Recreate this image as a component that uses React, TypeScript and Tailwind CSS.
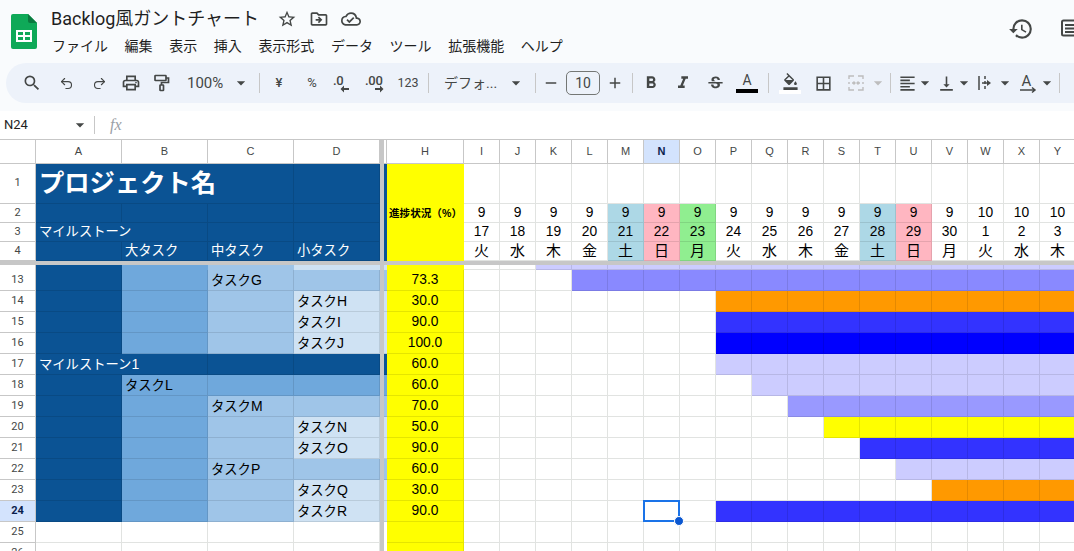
import { ReactNode } from "react"
import {
  MdHistory, MdOutlineCloudDone, MdOutlineDriveFileMove, MdOutlineLocalPrintshop,
  MdOutlineStarBorder, MdSearch, MdFormatBold, MdFormatItalic, MdStrikethroughS, MdBorderAll,
  MdFormatAlignLeft, MdVerticalAlignBottom, MdOutlineFormatColorFill, MdAdd, MdRemove, MdArrowDropDown,
} from "react-icons/md"
import { Undo2, Redo2 } from "lucide-react"

const ui = "font-['Roboto','Noto_Sans_CJK_JP',sans-serif]"
const sheet = "font-['Liberation_Sans','Noto_Sans_CJK_JP',sans-serif]"

const DARK = "bg-[#0b5394]"
const MID = "bg-[#6fa8dc]"
const LIGHT = "bg-[#9fc5e8]"
const PALE = "bg-[#cfe2f3]"
const WHITE = "bg-white"

const menus = ["ファイル", "編集", "表示", "挿入", "表示形式", "データ", "ツール", "拡張機能", "ヘルプ"]
const dateCols = ["I", "J", "K", "L", "M", "N", "O", "P", "Q", "R", "S", "T", "U", "V", "W", "X", "Y"]
const months = ["9", "9", "9", "9", "9", "9", "9", "9", "9", "9", "9", "9", "9", "9", "10", "10", "10"]
const days = ["17", "18", "19", "20", "21", "22", "23", "24", "25", "26", "27", "28", "29", "30", "1", "2", "3"]
const weekdays = ["火", "水", "木", "金", "土", "日", "月", "火", "水", "木", "金", "土", "日", "月", "火", "水", "木"]

const dayColor = (i: number) => {
  if (i === 4 || i === 11) return "bg-[#add8e6]"
  if (i === 5 || i === 12) return "bg-[#ffb6c1]"
  if (i === 6) return "bg-[#90ee90]"
  return WHITE
}

type Row = {
  n: string
  a: string
  b: string
  c: string
  d: string
  tone: string
  label?: string
  level?: "a" | "b" | "c" | "d"
  value?: string
  start?: number
  bar?: string
}

const rows: Row[] = [
  { n: "13", a: DARK, b: MID, c: LIGHT, d: LIGHT, tone: LIGHT, label: "タスクG", level: "c", value: "73.3", start: 3, bar: "bg-[#8989ff]" },
  { n: "14", a: DARK, b: MID, c: LIGHT, d: PALE, tone: PALE, label: "タスクH", level: "d", value: "30.0", start: 7, bar: "bg-[#ff9900]" },
  { n: "15", a: DARK, b: MID, c: LIGHT, d: PALE, tone: PALE, label: "タスクI", level: "d", value: "90.0", start: 7, bar: "bg-[#3333ff]" },
  { n: "16", a: DARK, b: MID, c: LIGHT, d: PALE, tone: PALE, label: "タスクJ", level: "d", value: "100.0", start: 7, bar: "bg-[#0000ff]" },
  { n: "17", a: DARK, b: DARK, c: DARK, d: DARK, tone: DARK, label: "マイルストーン1", level: "a", value: "60.0", start: 7, bar: "bg-[#ccccff]" },
  { n: "18", a: DARK, b: MID, c: MID, d: MID, tone: MID, label: "タスクL", level: "b", value: "60.0", start: 8, bar: "bg-[#ccccff]" },
  { n: "19", a: DARK, b: MID, c: LIGHT, d: LIGHT, tone: LIGHT, label: "タスクM", level: "c", value: "70.0", start: 9, bar: "bg-[#9999ff]" },
  { n: "20", a: DARK, b: MID, c: LIGHT, d: PALE, tone: PALE, label: "タスクN", level: "d", value: "50.0", start: 10, bar: "bg-[#ffff00]" },
  { n: "21", a: DARK, b: MID, c: LIGHT, d: PALE, tone: PALE, label: "タスクO", level: "d", value: "90.0", start: 11, bar: "bg-[#3333ff]" },
  { n: "22", a: DARK, b: MID, c: LIGHT, d: LIGHT, tone: LIGHT, label: "タスクP", level: "c", value: "60.0", start: 12, bar: "bg-[#ccccff]" },
  { n: "23", a: DARK, b: MID, c: LIGHT, d: PALE, tone: PALE, label: "タスクQ", level: "d", value: "30.0", start: 13, bar: "bg-[#ff9900]" },
  { n: "24", a: DARK, b: MID, c: LIGHT, d: PALE, tone: PALE, label: "タスクR", level: "d", value: "90.0", start: 7, bar: "bg-[#3333ff]" },
  { n: "25", a: WHITE, b: WHITE, c: WHITE, d: WHITE, tone: WHITE },
  { n: "26", a: WHITE, b: WHITE, c: WHITE, d: WHITE, tone: WHITE },
]

function SheetsLogo() {
  return (
    <svg width="26" height="35" viewBox="0 0 26 35">
      <path d="M2 0h15l9 9v24a2 2 0 0 1-2 2H2a2 2 0 0 1-2-2V2a2 2 0 0 1 2-2z" fill="#0fa958" />
      <path d="M17 0l9 9h-7a2 2 0 0 1-2-2z" fill="#0a7a3f" />
      <path d="M5 16h16v12H5zm2 2v3h5v-3zm7 0v3h5v-3zm-7 5v3h5v-3zm7 0v3h5v-3z" fill="#fff" fillRule="evenodd" />
    </svg>
  )
}

function Tool({ w, children }: { w: string; children: ReactNode }) {
  return <div className={`${w} shrink-0 flex items-center justify-center text-[#444746]`}>{children}</div>
}

function Sep({ m }: { m: string }) {
  return <div className={`${m} w-px h-5 shrink-0 bg-[#c7c7c7]`} />
}

function Caret({ w = "w-[18px]", faded }: { w?: string; faded?: boolean }) {
  return (
    <Tool w={w}>
      <MdArrowDropDown size={20} className={`shrink-0 ${faded ? "text-[#bdbdbd]" : ""}`} />
    </Tool>
  )
}

function DecimalIcon({ label, dir }: { label: string; dir: "left" | "right" }) {
  return (
    <div className="relative w-[24px] h-[24px] text-[#444746]">
      <span className="absolute left-[3px] top-[3px] text-[13px] font-medium leading-[14px] tracking-[-0.3px] whitespace-nowrap">{label}</span>
      <svg width="24" height="24" viewBox="0 0 24 24" className="absolute left-0 top-0" fill="currentColor">
        {dir === "left" ? <path d="M14 17h5v2h-5v2.500L10.500 18 14 14.500z" /> : <path d="M13 17h5v-2.500l3.500 3.500-3.500 3.500V19h-5z" />}
      </svg>
    </div>
  )
}

function RollerIcon() {
  return (
    <svg width="16" height="18" viewBox="0 0 16 18" fill="none" stroke="#444746" strokeWidth="1.7">
      <rect x="1" y="1.500" width="11" height="5" rx="0.5" />
      <path d="M12 4h2.500v4.500H7.500V11" />
      <rect x="6" y="11" width="3.500" height="5.500" rx="0.5" />
    </svg>
  )
}

function MergeIcon() {
  return (
    <svg width="18" height="18" viewBox="0 0 18 18" fill="none" stroke="#bdbdbd" strokeWidth="1.4">
      <path d="M7 2H2v3M2 13v3h5M11 2h5v3M16 13v3h-5M2 8v2M16 8v2M5 9h3M6.500 7.500 8 9l-1.500 1.500M13 9h-3M11.500 7.500 10 9l1.500 1.500" />
    </svg>
  )
}

function WrapIcon() {
  return (
    <svg width="18" height="18" viewBox="0 0 18 18" fill="none" stroke="#444746" strokeWidth="1.5">
      <path d="M3 2v14" />
      <path d="M9 2v14" strokeDasharray="3 2" />
      <path d="M6 9h6" />
      <path d="M11 6l4 3-4 3z" fill="#444746" stroke="none" />
    </svg>
  )
}

function RotateIcon() {
  return (
    <div className="relative w-[20px] h-[24px] text-[#444746]">
      <span className="absolute left-0 top-[1px] text-[15px] leading-[18px] w-[15px] text-center">A</span>
      <svg width="20" height="24" viewBox="0 0 20 24" className="absolute left-0 top-0" fill="none" stroke="currentColor" strokeWidth="1.5">
        <path d="M1 19h14M13 16.500l3 2.500-3 2.500" />
      </svg>
    </div>
  )
}

function OutlineIcon() {
  return (
    <svg width="21" height="18" viewBox="0 0 21 18" fill="none" stroke="#444746" strokeWidth="2">
      <rect x="1" y="1.500" width="19" height="15" rx="1.500" />
      <path d="M4 6h16M4 9.500h16M4 13h16" />
    </svg>
  )
}

function Toolbar() {
  return (
    <div className="ml-[6px] h-10 shrink-0 flex items-center rounded-l-full bg-[#edf2fa] pl-[10px] overflow-hidden">
      <Tool w="w-[32px]"><MdSearch size={20} /></Tool>
      <Tool w="ml-[2px] w-[33px]"><Undo2 size={15} strokeWidth={1.8} /></Tool>
      <Tool w="ml-px w-[31px]"><Redo2 size={15} strokeWidth={1.8} /></Tool>
      <Tool w="w-[31px]"><MdOutlineLocalPrintshop size={20} /></Tool>
      <Tool w="w-[31px]"><RollerIcon /></Tool>
      <div className="ml-[10px] w-[45px] shrink-0 text-[15px] text-[#444746]">100%</div>
      <Caret />
      <Sep m="ml-[9px]" />
      <Tool w="ml-[4px] w-[30px]"><span className="text-[13px] font-medium">¥</span></Tool>
      <Tool w="ml-[3px] w-[30px]"><span className="text-[13px]">%</span></Tool>
      <Tool w="w-[30px]"><DecimalIcon label=".0" dir="left" /></Tool>
      <Tool w="ml-[2px] w-[30px]"><DecimalIcon label=".00" dir="right" /></Tool>
      <Tool w="ml-[5px] w-[28px]"><span className="text-[12.500px]">123</span></Tool>
      <Sep m="ml-[6px]" />
      <div className="ml-[15px] w-[62px] shrink-0 text-[14px] text-[#444746]">デフォ...</div>
      <Caret w="w-[20px]" />
      <Sep m="ml-[9px]" />
      <Tool w="ml-[6px] w-[18px]"><MdRemove size={18} /></Tool>
      <div className="ml-[6px] w-[34px] h-6 shrink-0 rounded-[5px] border border-[#747775] flex items-center justify-center text-[14px] text-[#444746]">10</div>
      <Tool w="ml-[6px] w-[18px]"><MdAdd size={18} /></Tool>
      <Sep m="ml-[8px]" />
      <Tool w="ml-[2px] w-[31px]"><MdFormatBold size={20} /></Tool>
      <Tool w="ml-[2px] w-[30px]"><MdFormatItalic size={20} /></Tool>
      <Tool w="ml-[2px] w-[31px]"><MdStrikethroughS size={19} /></Tool>
      <Tool w="w-[32px]">
        <div className="flex flex-col items-center">
          <span className="text-[14px] leading-[15px]">A</span>
          <span className="mt-[1px] w-[22px] h-[4px] bg-black" />
        </div>
      </Tool>
      <Sep m="ml-[5px]" />
      <Tool w="ml-[5px] w-[32px]">
        <div className="flex flex-col items-center">
          <MdOutlineFormatColorFill size={17} />
          <span className="w-[22px] h-[4px] bg-white" />
        </div>
      </Tool>
      <Tool w="ml-px w-[32px]"><MdBorderAll size={19} /></Tool>
      <Tool w="ml-px w-[32px]"><MergeIcon /></Tool>
      <Caret w="w-[12px]" faded />
      <Sep m="ml-[6px]" />
      <Tool w="ml-[5px] w-[22px]"><MdFormatAlignLeft size={19} /></Tool>
      <Caret w="w-[14px]" />
      <Tool w="ml-[3px] w-[22px]"><MdVerticalAlignBottom size={19} /></Tool>
      <Caret w="w-[14px]" />
      <Tool w="ml-[3px] w-[22px]"><WrapIcon /></Tool>
      <Caret w="w-[18px]" />
      <Tool w="ml-[4px] w-[22px]"><RotateIcon /></Tool>
      <Caret w="w-[14px]" />
      <Sep m="ml-[5px]" />
    </div>
  )
}

function ColHead({ label, w, active }: { label: string; w: string; active?: boolean }) {
  return (
    <div className={`${w} shrink-0 border-r border-b border-[#c7c7c7] flex items-center justify-center text-[11px] ${active ? "bg-[#d3e3fd] font-bold text-[#0b1e4d]" : "bg-white text-[#444746]"}`}>
      {label}
    </div>
  )
}

function RowHead({ label, active }: { label: string; active?: boolean }) {
  return (
    <div className={`w-9 shrink-0 border-r border-b border-[#c7c7c7] flex items-center justify-center text-[11px] ${ui} ${active ? "bg-[#d3e3fd] font-bold text-[#0b1e4d]" : "bg-white text-[#444746]"}`}>
      {label}
    </div>
  )
}

function FreezeBar() {
  return <div className="w-1 shrink-0 bg-[#c7c7c7]" />
}

// latin runs sit a little larger than the kana next to them in the sheet
function CellText({ text }: { text: string }) {
  const runs = text.match(/[ -~]+|[^ -~]+/g) ?? []
  return (
    <>
      {runs.map((r, i) => (
        <span key={i} className={/^[ -~]/.test(r) ? "text-[14px]" : "text-[13.300px]"}>{r}</span>
      ))}
    </>
  )
}

function Cell({ color, text, overflow, low }: { color: string; text?: string; overflow?: boolean; low?: boolean }) {
  const line = color === WHITE ? "border-[#e1e3e1]" : "border-black/10"
  const ink = color === DARK ? "text-white" : "text-black"
  return (
    <div className={`w-[86px] shrink-0 ${color} ${line} border-b ${overflow ? "relative z-10" : "border-r"} ${low ? "pt-px" : ""} ${ink} pl-[3px] flex items-center whitespace-nowrap`}>
      {text && <CellText text={text} />}
    </div>
  )
}

function DateCell({ color, text, selected, big }: { color: string; text?: string; selected?: boolean; big?: boolean }) {
  const line = color === WHITE ? "border-[#e1e3e1]" : "border-black/10"
  return (
    <div className={`relative w-9 shrink-0 ${color} ${line} border-r border-b flex items-center justify-center ${big ? "text-[15px]" : "text-[13.800px]"} text-black`}>
      {text}
      {selected && (
        <div className="absolute z-20 -left-px -top-px w-[37px] h-[22px] border-2 border-[#1a73e8]">
          <span className="absolute -right-[6px] -bottom-[6px] w-[8px] h-[8px] rounded-full bg-[#0b57d0] border border-white box-content" />
        </div>
      )}
    </div>
  )
}

function Yellow({ children, line = true }: { children?: ReactNode; line?: boolean }) {
  return (
    <div className={`w-[77px] shrink-0 bg-[#ffff00] flex items-center justify-center text-[13.800px] text-black whitespace-nowrap ${line ? "pt-px border-r border-b border-black/10" : ""}`}>
      {children}
    </div>
  )
}

function Frozen() {
  const hdr = "flex h-[19px] shrink-0"
  return (
    <div className={`flex flex-col shrink-0 ${sheet}`}>
      <div className={`flex h-10 shrink-0 ${sheet}`}>
        <RowHead label="1" />
        <div className={`w-[258px] shrink-0 ${DARK} border-r border-b border-black/10 pl-[3px] flex items-center text-white font-bold text-[25.300px] whitespace-nowrap`}>プロジェクト名</div>
        <Cell color={DARK} />
        <FreezeBar />
        <div className={`w-[3px] shrink-0 ${DARK}`} />
        <Yellow line={false} />
        {dateCols.map((c) => <DateCell key={c} color={WHITE} />)}
      </div>
      <div className={hdr}>
        <RowHead label="2" />
        <Cell color={DARK} /><Cell color={DARK} /><Cell color={DARK} /><Cell color={DARK} />
        <FreezeBar />
        <div className={`w-[3px] shrink-0 ${DARK}`} />
        <Yellow line={false}><span className="font-bold text-[10.600px]">進捗状況（%）</span></Yellow>
        {months.map((m, i) => <DateCell key={i} color={dayColor(i)} text={m} />)}
      </div>
      <div className={hdr}>
        <RowHead label="3" />
        <Cell color={DARK} text="マイルストーン" overflow /><Cell color={DARK} /><Cell color={DARK} /><Cell color={DARK} />
        <FreezeBar />
        <div className={`w-[3px] shrink-0 ${DARK}`} />
        <Yellow line={false} />
        {days.map((d, i) => <DateCell key={i} color={dayColor(i)} text={d} />)}
      </div>
      <div className={hdr}>
        <RowHead label="4" />
        <Cell color={DARK} /><Cell color={DARK} text="大タスク" /><Cell color={DARK} text="中タスク" /><Cell color={DARK} text="小タスク" />
        <FreezeBar />
        <div className={`w-[3px] shrink-0 ${DARK}`} />
        <Yellow line={false} />
        {weekdays.map((d, i) => <DateCell key={i} color={dayColor(i)} text={d} big />)}
      </div>
    </div>
  )
}

function HiddenRow() {
  return (
    <div className={`flex h-[5px] shrink-0 ${sheet}`}>
      <div className="w-9 shrink-0 bg-white border-r border-[#c7c7c7]" />
      <div className={`w-[86px] shrink-0 ${DARK}`} />
      <div className={`w-[86px] shrink-0 ${MID}`} />
      <div className={`w-[86px] shrink-0 ${LIGHT}`} />
      <div className={`w-[86px] shrink-0 ${PALE}`} />
      <FreezeBar />
      <div className={`w-[3px] shrink-0 ${PALE}`} />
      <div className="w-[77px] shrink-0 bg-[#ffff00]" />
      {dateCols.map((c, i) => (
        <div key={c} className={`w-9 shrink-0 border-r border-b ${i >= 2 ? "bg-[#ccccff] border-black/10" : "bg-white border-[#e1e3e1]"}`} />
      ))}
    </div>
  )
}

function DataRow({ row }: { row: Row }) {
  const active = row.n === "24"
  return (
    <div className={`flex h-[21px] shrink-0 ${sheet}`}>
      <RowHead label={row.n} active={active} />
      <Cell low color={row.a} text={row.level === "a" ? row.label : undefined} overflow={row.level === "a"} />
      <Cell low color={row.b} text={row.level === "b" ? row.label : undefined} />
      <Cell low color={row.c} text={row.level === "c" ? row.label : undefined} />
      <Cell low color={row.d} text={row.level === "d" ? row.label : undefined} />
      <FreezeBar />
      <div className={`w-[3px] shrink-0 ${row.tone} ${row.tone === WHITE ? "" : "border-b border-black/10"}`} />
      <Yellow>{row.value}</Yellow>
      {dateCols.map((c, i) => (
        <DateCell
          key={c}
          color={row.start !== undefined && row.bar && i >= row.start ? row.bar : WHITE}
          selected={active && c === "N"}
        />
      ))}
    </div>
  )
}

export default function App() {
  return (
    <div className={`w-[1074px] h-[551px] overflow-hidden bg-[#f9fbfd] flex flex-col ${ui}`}>
      <div className="h-[63px] shrink-0 flex">
        <div className="pl-[11px] pt-[14px] w-[51px] shrink-0"><SheetsLogo /></div>
        <div className="flex-1 flex flex-col">
          <div className="mt-[6px] flex items-center h-[26px]">
            <span className="text-[18px] text-[#1f1f1f] leading-[26px] w-[226px]">Backlog風ガントチャート</span>
            <div className="flex items-center gap-[12px] text-[#444746]">
              <MdOutlineStarBorder size={20} />
              <MdOutlineDriveFileMove size={20} />
              <MdOutlineCloudDone size={20} />
            </div>
          </div>
          <div className="mt-[2px] flex gap-[16.600px] text-[14px] text-[#1f1f1f] leading-6 pl-px">
            {menus.map((m) => <span key={m}>{m}</span>)}
          </div>
        </div>
        <div className="pt-[16px] flex items-start gap-[27px] text-[#444746] w-[66px] shrink-0 overflow-hidden">
          <MdHistory size={26} className="shrink-0" />
          <div className="mt-[3px] shrink-0"><OutlineIcon /></div>
        </div>
      </div>

      <Toolbar />

      <div className="mt-2 h-[29px] shrink-0 bg-white border-b border-[#c7c7c7] flex items-center">
        <span className="pl-[4px] w-[70px] text-[13px] text-[#1f1f1f]">N24</span>
        <MdArrowDropDown size={20} className="text-[#444746]" />
        <div className="ml-[4px] w-px h-[18px] bg-[#c7c7c7]" />
        <span className="ml-[15px] font-['Liberation_Serif',serif] italic text-[16px] text-[#9aa0a6]">fx</span>
      </div>

      <div className={`flex h-6 shrink-0 ${sheet}`}>
        <ColHead label="" w="w-9" />
        {["A", "B", "C", "D"].map((c) => <ColHead key={c} label={c} w="w-[86px]" />)}
        <FreezeBar />
        <ColHead label="" w="w-[3px]" />
        <ColHead label="H" w="w-[77px]" />
        {dateCols.map((c) => <ColHead key={c} label={c} w="w-9" active={c === "N"} />)}
      </div>

      <Frozen />
      <div className="h-1 shrink-0 bg-[#c7c7c7]" />
      <HiddenRow />
      {rows.map((r) => <DataRow key={r.n} row={r} />)}
    </div>
  )
}
